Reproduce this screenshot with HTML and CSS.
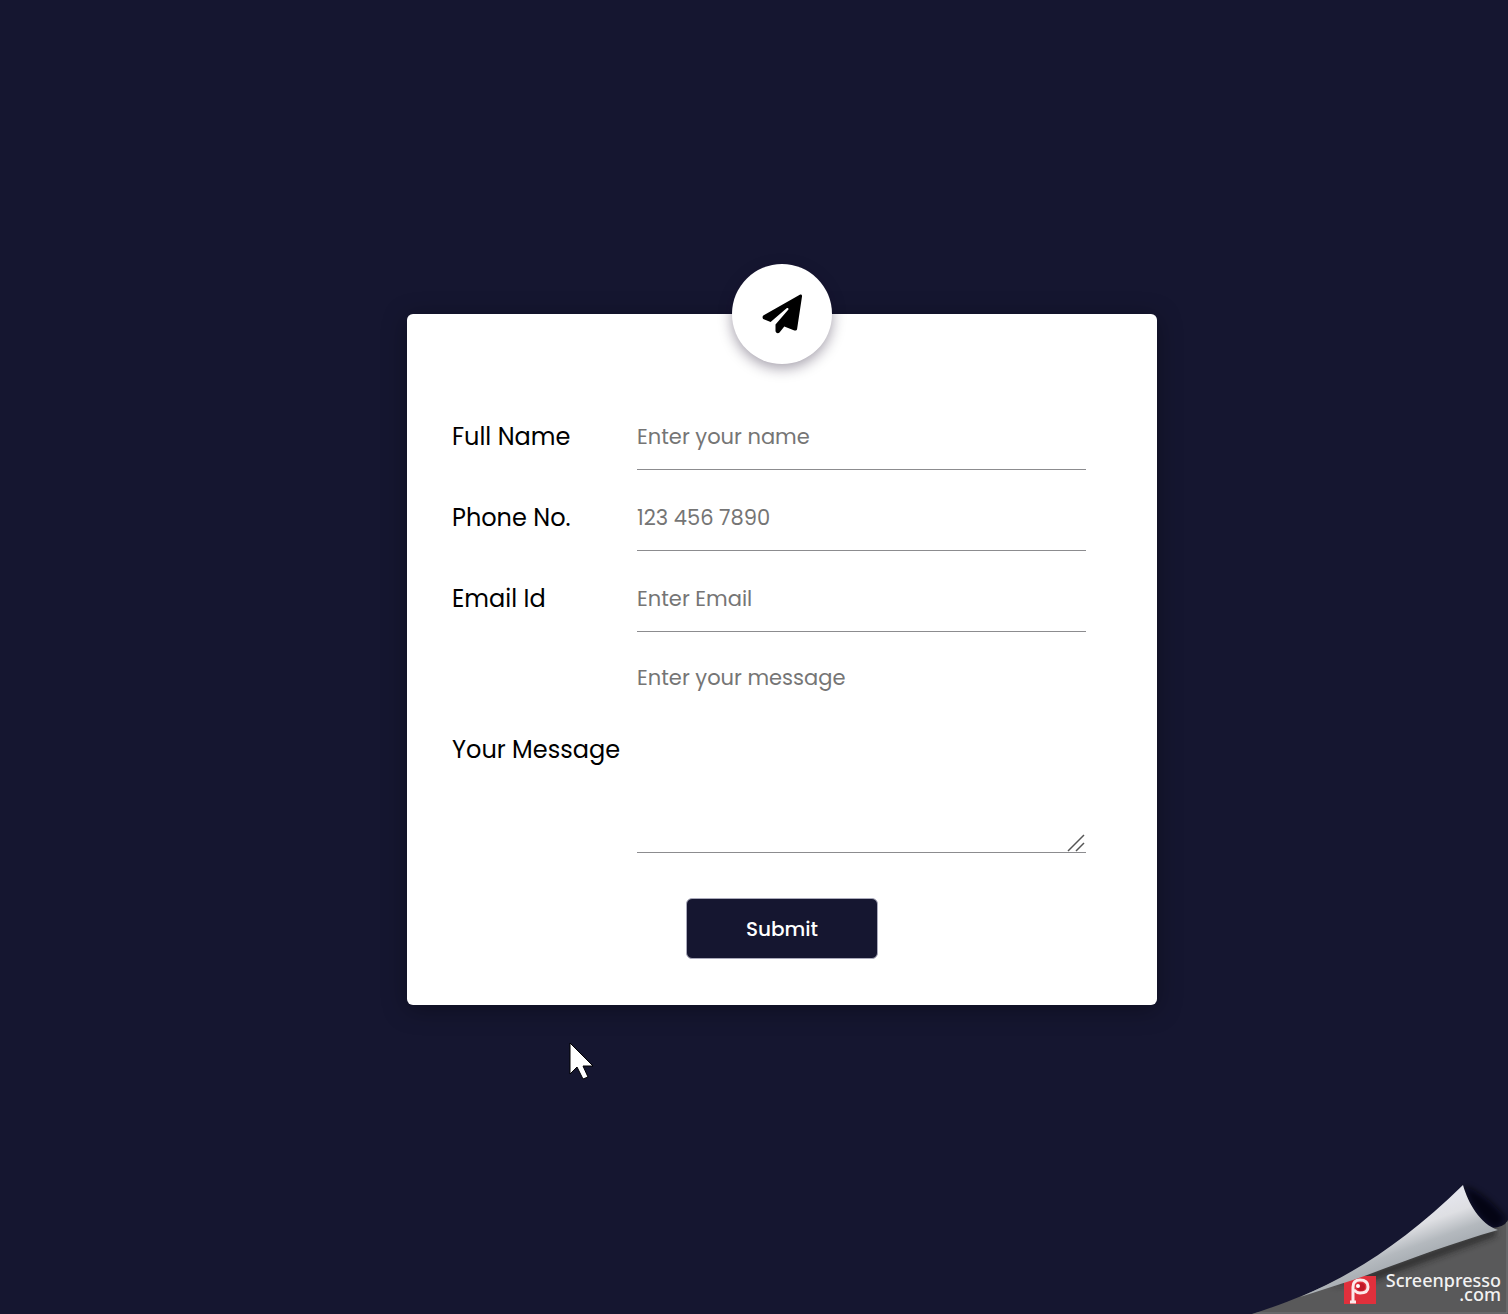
FILE: index.html
```html
<!DOCTYPE html>
<html lang="en">
<head>
  <meta charset="utf-8">
  <meta name="viewport" content="width=device-width, initial-scale=1">
  <title>Contact form</title>
  <link rel="stylesheet" href="styles.css">
</head>
<body>
  <main class="page">
    <form class="card">
      <div class="badge">
        <svg class="badge-icon" viewBox="0 0 40 40" aria-hidden="true">
          <path d="M37.800.7 1.700 21.300c-1.700 1-1.400 3.200.1 3.900l6.800 2.900L24.600 14.300c1.200-1 2.500.3 1.600 1.500L13.500 30.500v6.300c0 2.300 2.700 3.200 4 1.600l4.800-5.900 10.100 3.900c1.100.5 2.500-.2 2.700-1.400L40 2.500C40.300.9 39.100 0 37.800.7z"/>
        </svg>
      </div>
      <div class="row">
        <label class="label" for="name">Full Name</label>
        <input class="field" id="name" type="text" placeholder="Enter your name">
      </div>
      <div class="row">
        <label class="label" for="phone">Phone No.</label>
        <input class="field" id="phone" type="tel" placeholder="123 456 7890">
      </div>
      <div class="row">
        <label class="label" for="email">Email Id</label>
        <input class="field" id="email" type="email" placeholder="Enter Email">
      </div>
      <div class="row">
        <label class="label" for="message">Your Message</label>
        <div class="message">
          <textarea class="field field-area" id="message" placeholder="Enter your message"></textarea>
          <svg class="grip" viewBox="0 0 18 18" aria-hidden="true"><path d="M1 17 17 1M9 17l8-8"/></svg>
        </div>
      </div>
      <button class="submit" type="submit">Submit</button>
    </form>
  </main>

  <svg class="pointer" viewBox="0 0 26 38" aria-hidden="true">
    <path d="M1 1v31l7-7 6 12 5-2-5-11h10z"/>
  </svg>

  <svg class="corner" viewBox="0 0 268 144" role="img" aria-label="Screenpresso.com">
    <defs>
      <linearGradient id="curl" gradientUnits="userSpaceOnUse" x1="190" y1="34" x2="208" y2="84">
        <stop offset="0" stop-color="#e4e5ec"/>
        <stop offset=".3" stop-color="#dedfe3"/>
        <stop offset=".65" stop-color="#b4b9be"/>
        <stop offset="1" stop-color="#a2a8ae"/>
      </linearGradient>
      <filter id="soft" x="-20%" y="-20%" width="140%" height="140%"><feGaussianBlur stdDeviation="3"/></filter>
      <clipPath id="under"><path d="M12 144C40 135 70 124 100 108L250 58Q264 58 268 50V144z"/></clipPath>
    </defs>
    <path class="curl-shade" filter="url(#soft)" d="M224 16Q246 24 266 48L258 60Q236 52 224 16z"/>
    <path class="under" d="M12 144C40 135 70 124 100 108L250 58Q264 58 268 50V144z"/>
    <g clip-path="url(#under)">
      <path class="under-shade" filter="url(#soft)" d="M90 116 256 58V66L130 112z"/>
      <path class="under-edge" d="M12 143H267V52"/>
      <path class="logo" d="M104 106H136V134H104z"/>
    </g>
    <path class="logo-ring" d="M113 133V117q0-7 7-7 8 0 8 7 0 6-8 6-3 0-6-3M110 132h6"/>
    <circle class="logo-shade" cx="121" cy="117" r="4"/>
    <circle class="logo-dot" cx="118" cy="116" r="2"/>
    <path fill="url(#curl)" d="M60 127C112 105 165 72 223 15 228 33 240 54 258 60 205 75 155 95 113 110 95 116 78 121 60 127z"/>
    <text class="corner-text" x="261" y="117">Screenpresso<tspan x="261" dy="14">.com</tspan></text>
  </svg>
</body>
</html>
```
FILE: styles.css
```css
* {
  box-sizing: border-box;
}

body {
  margin: 0;
  position: relative;
  background: #151630;
  color: #000;
  font-family: Poppins, Inter, "Open Sans", sans-serif;
}

.page {
  min-height: 100vh;
  display: flex;
  align-items: center;
  justify-content: center;
  padding: 5px 0 0 56px;
}

.card {
  position: relative;
  width: 100%;
  max-width: 750px;
  display: flex;
  flex-direction: column;
  gap: 15px;
  padding: 90px 71px 46px 45px;
  border-radius: 6px;
  background: #fff;
  box-shadow: 0 4px 24px rgba(0, 0, 0, .35);
}

.badge {
  position: absolute;
  top: -50px;
  left: 50%;
  width: 100px;
  height: 100px;
  margin-left: -50px;
  display: flex;
  align-items: center;
  justify-content: center;
  border-radius: 50%;
  background: #fff;
  box-shadow: 0 4px 14px rgba(22, 10, 40, .4);
}

.badge-icon {
  width: 40px;
  height: 40px;
}

.row {
  display: grid;
  grid-template-columns: 185px 1fr;
  align-items: center;
}

.label {
  font-size: 24px;
  line-height: 36px;
  white-space: nowrap;
}

.field {
  display: block;
  width: 100%;
  height: 66px;
  padding: 0;
  border: 0;
  border-bottom: 1px solid #8c8c8f;
  border-radius: 0;
  outline: 0;
  background: transparent;
  color: #000;
  font-family: inherit;
  font-size: 21px;
  line-height: 32px;
}

.field::placeholder {
  color: #757575;
  opacity: 1;
}

.message {
  position: relative;
}

.field-area {
  height: 206px;
  padding: 15px 0;
  resize: none;
}

.grip {
  position: absolute;
  right: 1px;
  bottom: 1px;
  width: 18px;
  height: 18px;
  fill: none;
  stroke: #555;
  stroke-width: 1.5;
  pointer-events: none;
}

.submit {
  align-self: center;
  width: 192px;
  height: 61px;
  margin: 30px 0 0 26px;
  border: 1px solid #a9a9ba;
  border-radius: 6px;
  background: #151630;
  color: #fff;
  font-family: inherit;
  font-size: 20px;
  font-weight: 500;
  cursor: pointer;
}

.pointer {
  position: absolute;
  left: 569px;
  top: 1042px;
  width: 26px;
  height: 38px;
  fill: #fff;
  stroke: #000;
  stroke-width: 1;
  pointer-events: none;
}

.corner {
  position: absolute;
  right: 0;
  bottom: 0;
  width: 268px;
  height: 144px;
}

.curl-shade {
  fill: #05060f;
  opacity: .8;
}

.under {
  fill: #59595a;
}

.under-shade {
  fill: #222;
  opacity: .7;
}

.under-edge {
  fill: none;
  stroke: #77777a;
}

.logo {
  fill: #e0303c;
}

.logo-ring {
  fill: none;
  stroke: #fbe9ea;
  stroke-width: 3;
}

.logo-shade {
  fill: #c01828;
}

.logo-dot {
  fill: #fff;
}

.corner-text {
  fill: #f2f2f2;
  font-family: "Noto Sans", sans-serif;
  font-size: 18px;
  font-weight: 500;
  text-anchor: end;
}
```
